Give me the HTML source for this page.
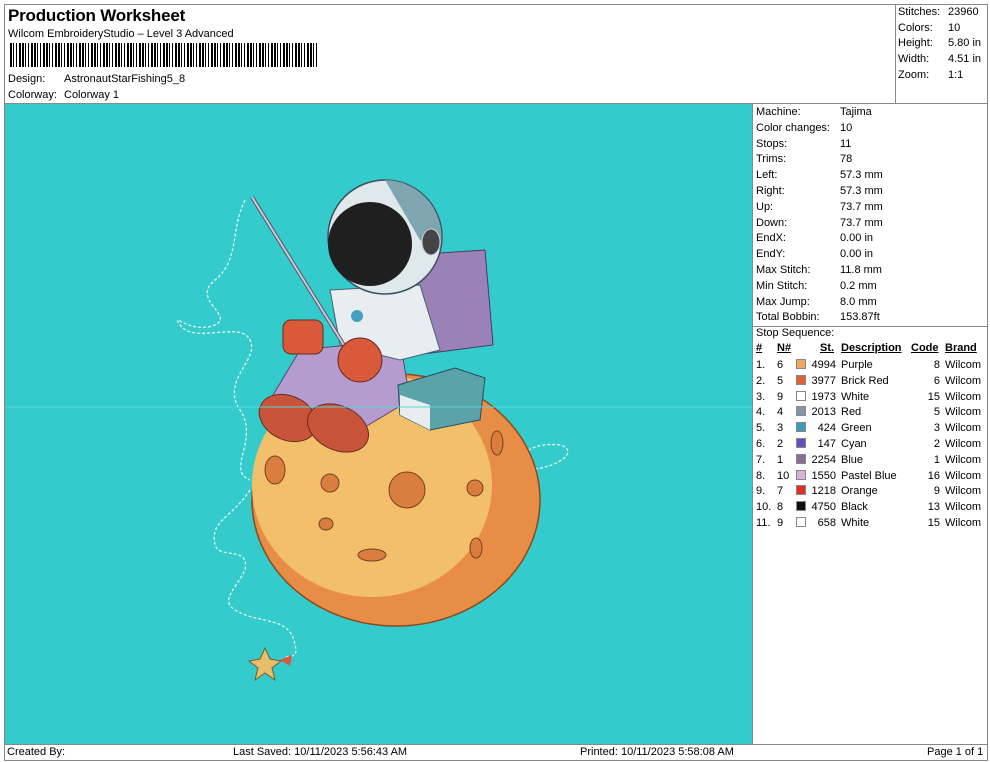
<!DOCTYPE html>
<html><head><meta charset="utf-8"><style>
*{margin:0;padding:0;box-sizing:border-box}
body{width:990px;height:762px;background:#fff;font-family:"Liberation Sans",Arial,sans-serif;font-size:11px;color:#000;position:relative;overflow:hidden}
.a{position:absolute;white-space:nowrap}
.bl{position:absolute;background:#888}
</style></head><body>
<div class="bl" style="left:4px;top:4px;width:984px;height:1px"></div>
<div class="bl" style="left:4px;top:4px;width:1px;height:757px"></div>
<div class="bl" style="left:987px;top:4px;width:1px;height:757px"></div>
<div class="bl" style="left:895px;top:4px;width:1px;height:99px"></div>
<div class="bl" style="left:4px;top:103px;width:984px;height:1px"></div>
<div class="bl" style="left:752px;top:103px;width:1px;height:642px"></div>
<div class="bl" style="left:752px;top:326px;width:236px;height:1px"></div>
<div class="bl" style="left:4px;top:744px;width:984px;height:1px"></div>
<div class="bl" style="left:4px;top:760px;width:984px;height:1px"></div>

<div class="a" style="left:8px;top:6px;font-size:17px;font-weight:bold;letter-spacing:-0.2px">Production Worksheet</div>
<div class="a" style="left:8px;top:28px">Wilcom EmbroideryStudio – Level 3 Advanced</div>
<div class="a" style="left:10px;top:43px;width:308px;height:24px;background:repeating-linear-gradient(90deg,#000 0 2px,#fff 2px 3px,#000 3px 4px,#fff 4px 6px,#000 6px 7px,#fff 7px 9px,#000 9px 11px,#fff 11px 12px)"></div>
<div class="a" style="left:8px;top:73px">Design:</div><div class="a" style="left:64px;top:73px">AstronautStarFishing5_8</div>
<div class="a" style="left:8px;top:89px">Colorway:</div><div class="a" style="left:64px;top:89px">Colorway 1</div>

<div class="a" style="left:898px;top:5px;line-height:15.7px">Stitches:<br>Colors:<br>Height:<br>Width:<br>Zoom:</div>
<div class="a" style="left:948px;top:5px;line-height:15.7px">23960<br>10<br>5.80 in<br>4.51 in<br>1:1</div>

<div class="a" style="left:5px;top:104px;width:747px;height:640px;background:#33cbcb">
<svg width="747" height="640" viewBox="5 104 747 640" xmlns="http://www.w3.org/2000/svg">
<g fill="none" stroke="#e8f4f4" stroke-width="1.3" stroke-dasharray="3 2">
<path d="M245 200 C230 230 240 260 215 280 C190 300 235 315 215 325 C190 335 170 310 180 325 C195 345 240 320 250 340 C260 360 220 380 240 410 C260 440 225 470 250 480"/>
<path d="M250 490 C230 520 210 520 215 545 C220 560 250 545 245 570 C235 590 220 600 235 610 C260 625 290 615 295 645 C300 660 285 655 285 658"/>
<path d="M260 470 C330 500 420 470 470 470 C520 470 520 440 560 445 C580 450 560 470 520 470"/>
</g>
<ellipse cx="396" cy="500" rx="144" ry="126" fill="#e88d45" stroke="#8a4a20" stroke-width="1.5"/>
<ellipse cx="372" cy="485" rx="120" ry="112" fill="#f2c06a"/>
<g fill="#d97e3e" stroke="#7a4020" stroke-width="1">
<ellipse cx="275" cy="470" rx="10" ry="14"/><ellipse cx="330" cy="483" rx="9" ry="9"/><circle cx="407" cy="490" r="18"/><ellipse cx="326" cy="524" rx="7" ry="6"/><ellipse cx="372" cy="555" rx="14" ry="6"/><ellipse cx="497" cy="443" rx="6" ry="12"/><ellipse cx="475" cy="488" rx="8" ry="8"/><ellipse cx="476" cy="548" rx="6" ry="10"/>
</g>
<path d="M410 255 L485 250 L493 345 L415 355 Z" fill="#9a82b8" stroke="#4a3a60"/>
<path d="M300 350 L400 340 L410 400 L360 430 L300 410 L270 400 Z" fill="#b49ccf" stroke="#5a4570"/>
<path d="M330 290 L420 285 L440 350 L400 360 L340 345 Z" fill="#e8eef0" stroke="#4a6070"/>
<ellipse cx="288" cy="418" rx="30" ry="22" fill="#c8553a" stroke="#6a2a20" transform="rotate(25 288 418)"/>
<ellipse cx="338" cy="428" rx="32" ry="22" fill="#c8553a" stroke="#6a2a20" transform="rotate(25 338 428)"/>
<path d="M398 385 L455 368 L485 378 L480 420 L430 430 L400 415 Z" fill="#5aa3a8" stroke="#2a4a60"/>
<path d="M400 395 L430 405 L430 430 L400 415 Z" fill="#e8eef0"/>
<line x1="252" y1="197" x2="347" y2="350" stroke="#556" stroke-width="4"/>
<line x1="252" y1="197" x2="347" y2="350" stroke="#ccd" stroke-width="2"/>
<rect x="283" y="320" width="40" height="34" rx="8" fill="#d85a3a" stroke="#6a2a20"/>
<circle cx="360" cy="360" r="22" fill="#d85a3a" stroke="#6a2a20"/>
<circle cx="385" cy="237" r="57" fill="#dfe8ea" stroke="#3a5060" stroke-width="1.5"/>
<path d="M385 180 A57 57 0 0 1 440 250 L420 240 Z" fill="#7fa5b0"/>
<ellipse cx="370" cy="244" rx="42" ry="42" fill="#1f1f1f"/>
<ellipse cx="431" cy="242" rx="9" ry="13" fill="#444" stroke="#ccd"/>
<circle cx="357" cy="316" r="6" fill="#44a0c0"/>
<path d="M265 648 L270 659 L281 661 L272 668 L275 680 L265 673 L255 680 L258 668 L249 661 L260 659 Z" fill="#e6bf6a" stroke="#7a5a30"/>
<path d="M280 660 L292 655 L290 666 Z" fill="#d85a3a"/>
<line x1="0" y1="407" x2="760" y2="407" stroke="#5ad5d5" stroke-width="1"/>
</svg>
</div>

<div class="a" style="left:756px;top:105px;line-height:15.8px">Machine:<br>Color changes:<br>Stops:<br>Trims:<br>Left:<br>Right:<br>Up:<br>Down:<br>EndX:<br>EndY:<br>Max Stitch:<br>Min Stitch:<br>Max Jump:<br>Total Bobbin:<br>Stop Sequence:</div>
<div class="a" style="left:840px;top:105px;line-height:15.8px">Tajima<br>10<br>11<br>78<br>57.3 mm<br>57.3 mm<br>73.7 mm<br>73.7 mm<br>0.00 in<br>0.00 in<br>11.8 mm<br>0.2 mm<br>8.0 mm<br>153.87ft</div>

<div class="a" style="left:756px;top:342px;font-weight:bold;text-decoration:underline">#</div>
<div class="a" style="left:777px;top:342px;font-weight:bold;text-decoration:underline">N#</div>
<div class="a" style="left:820px;top:342px;font-weight:bold;text-decoration:underline">St.</div>
<div class="a" style="left:841px;top:342px;font-weight:bold;text-decoration:underline">Description</div>
<div class="a" style="left:911px;top:342px;font-weight:bold;text-decoration:underline">Code</div>
<div class="a" style="left:945px;top:342px;font-weight:bold;text-decoration:underline">Brand</div>
<div class="a" style="left:756px;top:358px;line-height:15.8px">1.<br>2.<br>3.<br>4.<br>5.<br>6.<br>7.<br>8.<br>9.<br>10.<br>11.</div>
<div class="a" style="left:777px;top:358px;line-height:15.8px">6<br>5<br>9<br>4<br>3<br>2<br>1<br>10<br>7<br>8<br>9</div>
<div class="a" style="left:806px;top:358px;width:30px;text-align:right;line-height:15.8px">4994<br>3977<br>1973<br>2013<br>424<br>147<br>2254<br>1550<br>1218<br>4750<br>658</div>
<div class="a" style="left:841px;top:358px;line-height:15.8px">Purple<br>Brick Red<br>White<br>Red<br>Green<br>Cyan<br>Blue<br>Pastel Blue<br>Orange<br>Black<br>White</div>
<div class="a" style="left:900px;top:358px;width:40px;text-align:right;line-height:15.8px">8<br>6<br>15<br>5<br>3<br>2<br>1<br>16<br>9<br>13<br>15</div>
<div class="a" style="left:945px;top:358px;line-height:15.8px">Wilcom<br>Wilcom<br>Wilcom<br>Wilcom<br>Wilcom<br>Wilcom<br>Wilcom<br>Wilcom<br>Wilcom<br>Wilcom<br>Wilcom</div>
<div class="a" style="left:796px;top:359px">
<div style="width:10px;height:10px;background:#f0a860;border:1px solid #888;margin-bottom:5.8px"></div>
<div style="width:10px;height:10px;background:#e0603a;border:1px solid #888;margin-bottom:5.8px"></div>
<div style="width:10px;height:10px;background:#fff;border:1px solid #888;margin-bottom:5.8px"></div>
<div style="width:10px;height:10px;background:#7f97a8;border:1px solid #888;margin-bottom:5.8px"></div>
<div style="width:10px;height:10px;background:#3a9ab8;border:1px solid #888;margin-bottom:5.8px"></div>
<div style="width:10px;height:10px;background:#6050c0;border:1px solid #888;margin-bottom:5.8px"></div>
<div style="width:10px;height:10px;background:#8a6a9a;border:1px solid #888;margin-bottom:5.8px"></div>
<div style="width:10px;height:10px;background:#d8b0d8;border:1px solid #888;margin-bottom:5.8px"></div>
<div style="width:10px;height:10px;background:#e03020;border:1px solid #888;margin-bottom:5.8px"></div>
<div style="width:10px;height:10px;background:#111;border:1px solid #888;margin-bottom:5.8px"></div>
<div style="width:10px;height:10px;background:#fff;border:1px solid #888"></div>
</div>

<div class="a" style="left:7px;top:746px">Created By:</div>
<div class="a" style="left:233px;top:746px">Last Saved: 10/11/2023 5:56:43 AM</div>
<div class="a" style="left:580px;top:746px">Printed: 10/11/2023 5:58:08 AM</div>
<div class="a" style="left:927px;top:746px">Page 1 of 1</div>
</body></html>
